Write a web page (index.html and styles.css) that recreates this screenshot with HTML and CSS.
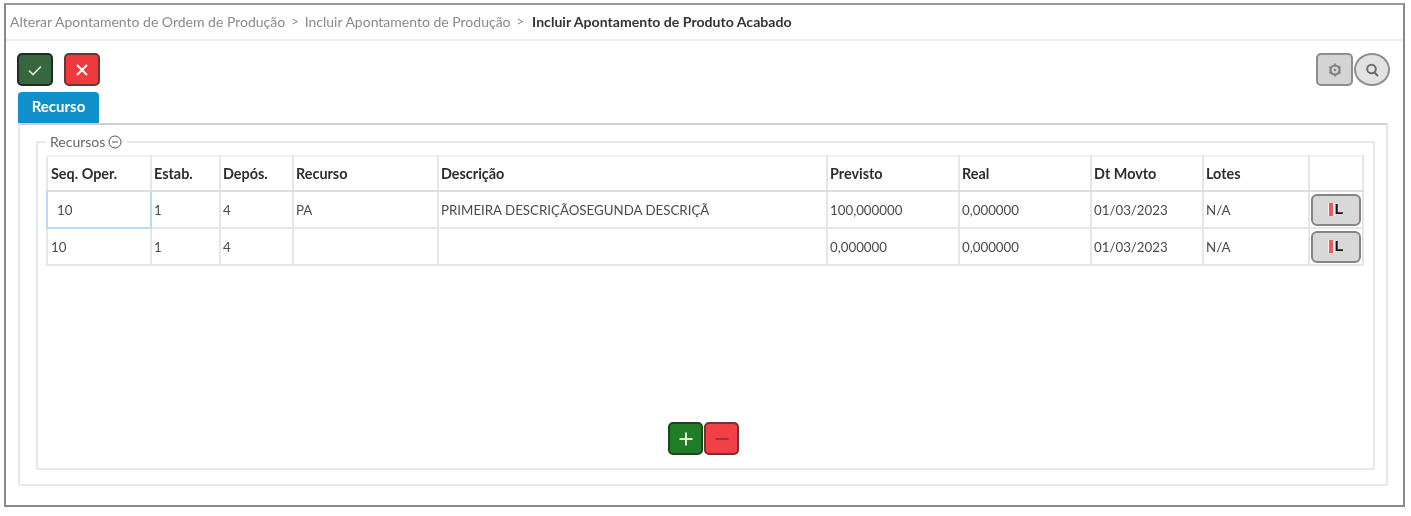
FILE: index.html
```html
<!DOCTYPE html>
<html lang="pt">
<head>
<meta charset="utf-8">
<title>Incluir Apontamento de Produto Acabado</title>
<link rel="stylesheet" href="styles.css">
</head>
<body>
<main class="frame">
  <nav class="crumbs">
    <span>Alterar Apontamento de Ordem de Produção</span><span class="sep">&gt;</span>
    <span>Incluir Apontamento de Produção</span><span class="sep">&gt;</span>
    <strong>Incluir Apontamento de Produto Acabado</strong>
  </nav>
  <div class="toolbar">
    <div class="actions">
      <button class="btn btn-ok" aria-label="Confirmar"><svg width="16" height="16" viewBox="0 0 16 16"><path d="M2 8.500l4 4 8-8" fill="none" stroke="#e4e8c8" stroke-width="1.600"/></svg></button>
      <button class="btn btn-cancel" aria-label="Cancelar"><svg width="14" height="14" viewBox="0 0 14 14"><path d="M2 2l10 10M12 2L2 12" fill="none" stroke="#fff" stroke-width="2"/></svg></button>
    </div>
    <div class="tools">
      <button class="tool" aria-label="Configurar"><svg width="16" height="16" viewBox="0 0 16 16"><circle cx="8" cy="8" r="4.500" fill="none" stroke="#827e84" stroke-width="2.200"/><circle cx="8" cy="8" r="1.200" fill="#8a8078"/><path d="M8 1.500v2M8 12.500v2M2.400 4.800l1.700 1M11.900 10.200l1.700 1M2.400 11.200l1.700-1M11.900 5.800l1.700-1" stroke="#827e84" stroke-width="1.600"/></svg></button>
      <button class="tool tool-round" aria-label="Pesquisar"><svg width="16" height="16" viewBox="0 0 16 16"><circle cx="7.500" cy="7" r="4.300" fill="none" stroke="#6a6a72" stroke-width="2"/><path d="M10.500 10.500L14 14" stroke="#6a6a6a" stroke-width="2"/></svg></button>
    </div>
  </div>
  <div class="tabs"><span class="tab">Recurso</span></div>
  <section class="panel">
    <div class="group">
      <div class="legend">Recursos <svg width="14" height="14" viewBox="0 0 14 14"><circle cx="7" cy="7" r="6" fill="none" stroke="#555"/><path d="M4 7h6" stroke="#555"/></svg></div>
      <table class="grid">
        <colgroup>
          <col class="c1"><col class="c2"><col class="c3"><col class="c4"><col class="c5"><col class="c6"><col class="c7"><col class="c8"><col class="c9"><col class="c10">
        </colgroup>
        <thead>
          <tr><th>Seq. Oper.</th><th>Estab.</th><th>Depós.</th><th>Recurso</th><th>Descrição</th><th>Previsto</th><th>Real</th><th>Dt Movto</th><th>Lotes</th><th></th></tr>
        </thead>
        <tbody>
          <tr><td class="focus">10</td><td>1</td><td>4</td><td>PA</td><td>PRIMEIRA DESCRIÇÃOSEGUNDA DESCRIÇÃ</td><td>100,000000</td><td>0,000000</td><td>01/03/2023</td><td>N/A</td><td class="cell-btn"><button class="lot"><i>I</i>L</button></td></tr>
          <tr><td>10</td><td>1</td><td>4</td><td></td><td></td><td>0,000000</td><td>0,000000</td><td>01/03/2023</td><td>N/A</td><td class="cell-btn"><button class="lot"><i>I</i>L</button></td></tr>
        </tbody>
      </table>
      <div class="rowbtns">
        <button class="mini mini-add" aria-label="Adicionar"><svg width="16" height="16" viewBox="0 0 16 16"><path d="M8 1.500v13M1.500 8h13" stroke="#e8f0c8" stroke-width="2"/></svg></button>
        <button class="mini mini-del" aria-label="Remover"><svg width="16" height="16" viewBox="0 0 16 16"><path d="M1.500 8h13" stroke="#8a3a4a" stroke-width="2"/></svg></button>
      </div>
    </div>
  </section>
</main>
</body>
</html>
```
FILE: styles.css
```css
* { box-sizing: border-box; }
html, body { margin: 0; padding: 0; background: #fff; }
body { padding: 3px 6px 0 4px; width: 1411px; height: 516px; overflow: hidden; font-family: Lato, "Liberation Sans", sans-serif; font-size: 13px; color: #444; }
.frame { height: 504px; border: 2px solid #8a8a8a; border-top-color: #999; background: #fff; display: flex; flex-direction: column; filter: blur(0.4px); }
.crumbs { height: 36px; flex: none; border-bottom: 2px solid #eee; padding: 0 0 2px 4px; display: flex; align-items: center; gap: 5px; color: #8a8a8a; font-size: 14px; white-space: nowrap; }
.crumbs strong { color: #333; font-weight: 700; font-size: 14.1px; margin-left: 2px; }
.crumbs .sep { padding: 0 1px; font-size: 13px; }
.toolbar { display: flex; justify-content: space-between; padding: 12px 13px 0 11px; height: 51px; flex: none; }
.actions { display: flex; gap: 11px; height: 34px; }
button { padding: 0; font: inherit; cursor: pointer; display: flex; align-items: center; justify-content: center; }
.btn { width: 36px; height: 33px; border-radius: 5px; border: 2px solid #2a2a2a; }
.btn-ok { background: #37663f; border-color: #222b24; }
.btn-cancel { background: #f0393c; border-color: #6e3237; }
.tools { display: flex; gap: 1px; height: 33px; }
.tool { width: 37px; height: 33px; background: #d4d4d4; border: 2px solid #8e8e8e; border-radius: 5px; }
.tool-round { width: 36px; border-radius: 50%; background: #e2e2e2; }
.tabs { height: 31px; flex: none; padding-left: 12px; display: flex; }
.tab { width: 81px; height: 31px; padding-bottom: 3px; background: #0f90cb; color: #fff; font-weight: 700; font-size: 15px; border-radius: 4px 4px 0 0; display: flex; align-items: center; justify-content: center; }
.panel { margin: 0 15px 0 12px; height: 363px; border: 2px solid #e8e8e8; border-top-color: #cfcfcf; border-radius: 2px; padding: 16px 11px 16px 16px; }
.group { position: relative; height: 329px; border: 2px solid #e8e8e8; padding: 12px 12px 0 8px; display: flex; flex-direction: column; }
.legend { position: absolute; left: 8px; top: -9px; background: #fff; padding: 0 5px 0 4px; color: #666; font-size: 14px; display: flex; align-items: center; gap: 3px; line-height: 16px; }
.grid { border-collapse: collapse; table-layout: fixed; width: 1316px; }
.c1 { width: 104px; } .c2 { width: 69px; } .c3 { width: 73px; } .c4 { width: 145px; } .c5 { width: 389px; } .c6 { width: 132px; } .c7 { width: 132px; } .c8 { width: 112px; } .c9 { width: 106px; } .c10 { width: 54px; }
.grid th, .grid td { border: 2px solid #e6e6e6; padding: 0 2px; text-align: left; white-space: nowrap; overflow: hidden; }
.grid th:first-child, .grid td:first-child { padding-left: 3px; }
.grid th { height: 35px; color: #2d2d2d; font-weight: 700; font-size: 14.4px; border-top-color: #f2f2f2; border-bottom-color: #dcdcdc; }
.grid td { height: 37px; color: #4a4a4a; font-size: 13.3px; }
.grid td.focus { border: 2px solid #b4dcf3; padding-left: 9px; }
.grid td.cell-btn { padding: 0 1px; }
.lot { width: 50px; height: 32px; background: #d8d8d8; border: 2px solid #858585; border-radius: 6px; font-weight: 700; font-size: 14px; line-height: 13px; color: #111; font-family: "Liberation Sans", sans-serif; }
.lot i { display: block; margin-right: 2px; font-style: normal; color: #f0595c; background: #f0595c; box-shadow: -1px 0 #f4f4f4, 2px 0 #f4f4f4; }
.rowbtns { margin-top: auto; padding-bottom: 13px; display: flex; justify-content: center; gap: 1px; }
.mini { width: 35px; height: 33px; border-radius: 5px; border: 2px solid #2f2f2f; }
.mini-add { background: #1f7d27; border-color: #1b4520; }
.mini-del { background: #f14146; border-color: #6e3237; }
```
